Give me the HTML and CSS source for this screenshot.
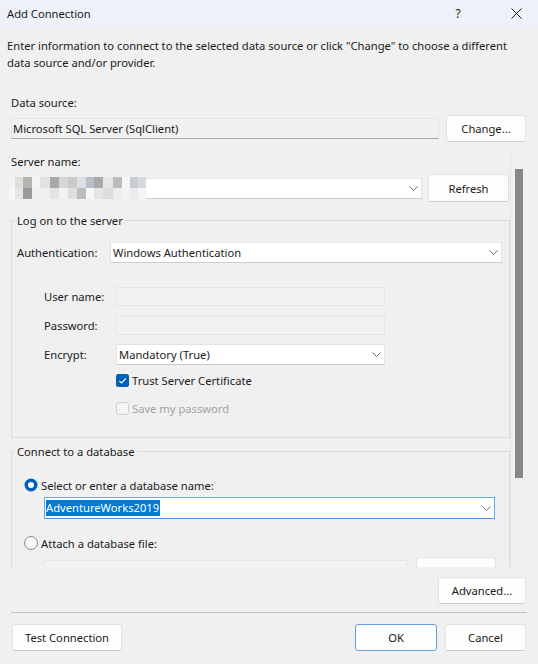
FILE: index.html
```html
<!DOCTYPE html>
<html>
<head>
<meta charset="utf-8">
<title>Add Connection</title>
<link rel="stylesheet" href="styles.css">
</head>
<body>
<div class="window">
  <div class="titlebar">
    <span class="title">Add Connection</span>
    <span class="help">?</span>
    <svg class="close" width="11" height="11" viewBox="0 0 11 11"><path d="M0.5 0.5 L10.5 10.5 M10.5 0.5 L0.5 10.5" stroke="#1a1a1a" stroke-width="1" fill="none"/></svg>
  </div>

  <p class="intro">Enter information to connect to the selected data source or click "Change" to choose a different<br>data source and/or provider.</p>

  <div class="ds">
    <div class="label">Data source:</div>
    <div class="ds-row">
      <div class="ds-box">Microsoft SQL Server (SqlClient)</div>
      <button class="btn btn-change">Change...</button>
    </div>
  </div>

  <div class="scroll">
    <div class="scroll-content">
      <div class="label server-label">Server name:</div>
      <div class="server-row">
        <div class="combo server-combo">
          <div class="mosaic"><div class="m-row m1"></div><div class="m-row m2"></div></div>
          <span class="combo-text"></span>
          <svg class="chev" width="9" height="5" viewBox="0 0 9 5"><path d="M0.5 0.5 L4.5 4.5 L8.5 0.5" fill="none" stroke="#707070" stroke-width="1"/></svg>
        </div>
        <button class="btn btn-refresh">Refresh</button>
      </div>

      <fieldset class="group group-logon">
        <legend>Log on to the server</legend>
        <div class="auth-row">
          <span class="lbl lbl-auth">Authentication:</span>
          <div class="combo auth-combo">
            <span class="combo-text">Windows Authentication</span>
            <svg class="chev" width="9" height="5" viewBox="0 0 9 5"><path d="M0.5 0.5 L4.5 4.5 L8.5 0.5" fill="none" stroke="#707070" stroke-width="1"/></svg>
          </div>
        </div>
        <div class="sub-row user-row">
          <span class="lbl lbl-sub">User name:</span>
          <div class="textbox"></div>
        </div>
        <div class="sub-row pass-row">
          <span class="lbl lbl-sub">Password:</span>
          <div class="textbox"></div>
        </div>
        <div class="sub-row enc-row">
          <span class="lbl lbl-sub">Encrypt:</span>
          <div class="combo enc-combo">
            <span class="combo-text">Mandatory (True)</span>
            <svg class="chev" width="9" height="5" viewBox="0 0 9 5"><path d="M0.5 0.5 L4.5 4.5 L8.5 0.5" fill="none" stroke="#707070" stroke-width="1"/></svg>
          </div>
        </div>
        <div class="check-row trust-row">
          <svg class="check" width="13" height="13" viewBox="0 0 13 13"><rect x="0" y="0" width="13" height="13" rx="2.5" fill="#005fb8"/><path d="M3.3 6.8 L5.5 9 L9.8 4.5" fill="none" stroke="#ffffff" stroke-width="1.1"/></svg>
          <span class="check-label">Trust Server Certificate</span>
        </div>
        <div class="check-row save-row">
          <svg class="check" width="13" height="13" viewBox="0 0 13 13"><rect x="0.5" y="0.5" width="12" height="12" rx="2.5" fill="#f5f5f5" stroke="#cfcfcf" stroke-width="1"/></svg>
          <span class="check-label disabled">Save my password</span>
        </div>
      </fieldset>

      <fieldset class="group group-db">
        <legend>Connect to a database</legend>
        <div class="radio-row radio-select">
          <svg class="radio" width="14" height="14" viewBox="0 0 14 14"><circle cx="7" cy="7" r="6.5" fill="#005fb8"/><circle cx="7" cy="7" r="3" fill="#ffffff"/></svg>
          <span class="radio-label">Select or enter a database name:</span>
        </div>
        <div class="combo db-combo">
          <span class="combo-text"><span class="sel">AdventureWorks2019</span></span>
          <svg class="chev" width="9" height="5" viewBox="0 0 9 5"><path d="M0.5 0.5 L4.5 4.5 L8.5 0.5" fill="none" stroke="#707070" stroke-width="1"/></svg>
        </div>
        <div class="radio-row radio-attach">
          <svg class="radio" width="14" height="14" viewBox="0 0 14 14"><circle cx="7" cy="7" r="6.5" fill="#f6f6f6" stroke="#8a8a8a" stroke-width="1"/></svg>
          <span class="radio-label">Attach a database file:</span>
        </div>
        <div class="attach-row">
          <div class="textbox attach-box"></div>
          <button class="btn btn-browse">Browse...</button>
        </div>
      </fieldset>
    </div>
    <div class="scrollbar"><div class="thumb"></div></div>
  </div>

  <div class="adv-row"><button class="btn btn-adv">Advanced...</button></div>
  <div class="sep"></div>
  <div class="footer">
    <button class="btn btn-test">Test Connection</button>
    <span class="spacer"></span>
    <button class="btn btn-ok">OK</button>
    <button class="btn btn-cancel">Cancel</button>
  </div>
</div>
</body>
</html>
```
FILE: styles.css
```css
* { box-sizing: border-box; }

body {
  margin: 0;
  background: #f0f0f0;
  font-family: "Noto Sans", "Open Sans", sans-serif;
  font-size: 11.2px;
  color: #1a1a1a;
}

.window {
  width: 538px;
  height: 664px;
  display: flex;
  flex-direction: column;
  overflow: hidden;
  background: #f0f0f0;
}

/* title bar */
.titlebar {
  flex: none;
  height: 27px;
  display: flex;
  align-items: center;
  padding-left: 7px;
  background: #eef2f8;
}
.title { flex: 1; }
.help { width: 12px; text-align: center; margin-right: 47px; font-size: 12px; }
.close { margin-right: 16px; }

.intro {
  margin: 10px 0 0;
  padding: 0 7px;
  line-height: 17px;
}

.label { line-height: 15px; }

/* data source */
.ds {
  margin-top: 24px;
  padding: 0 12px 0 11px;
}
.ds-row {
  display: flex;
  align-items: center;
  gap: 7px;
  height: 27px;
  margin-top: 5px;
}
.ds-box {
  width: 428px;
  height: 21px;
  border: 1px solid #e4e4e4;
  border-bottom-color: #a9a9a9;
  padding-left: 1px;
  line-height: 19px;
}

/* buttons */
.btn {
  font: inherit;
  color: #1a1a1a;
  background: #fdfdfd;
  border: 1px solid #e2e2e2;
  border-bottom-color: #cccccc;
  border-radius: 3px;
  height: 27px;
  padding: 0;
  flex: none;
}
.btn-change { width: 80px; }
.btn-refresh { width: 81px; height: 28px; }
.btn-browse { width: 80px; margin-left: 9px; }
.btn-adv { width: 88px; }
.btn-test { width: 110px; }
.btn-ok { width: 82px; border-color: #6aa3dc; }
.btn-cancel { width: 81px; }

/* scroll area */
.scroll {
  flex: none;
  display: flex;
  height: 415px;
  margin-top: 10px;
}
.scroll-content {
  width: 511px;
  flex: none;
  overflow: hidden;
  border-right: 1px solid #e2e2e2;
  padding-left: 11px;
  padding-top: 2px;
}
.scrollbar { flex: 1; }
.thumb {
  margin: 17px 0 0 4px;
  width: 8px;
  height: 309px;
  background: #878787;
}

/* combo boxes */
.combo {
  display: flex;
  align-items: center;
  background: #ffffff;
  border: 1px solid #e3e3e3;
  border-bottom-color: #cdcdcd;
  height: 21px;
  flex: none;
}
.combo-text { flex: 1; padding-left: 2px; white-space: nowrap; }
.chev { flex: none; margin-right: 3px; }

.server-row {
  display: flex;
  align-items: center;
  gap: 6px;
  height: 28px;
  margin: 5px 0 0 -2px;
}
.server-combo { width: 413px; }
.mosaic {
  width: 137px;
  height: 22px;
  margin: -1px 0 0 -1px;
  display: flex;
  flex-direction: column;
  flex: none;
}
.m-row { flex: 1; }
.m1 {
  background: linear-gradient(to right,
    #f3f3f3 0 6px, #dedede 6px 14px, #b5b5b0 14px 23px, #f4f4f4 23px 31px,
    #e2e2e2 31px 41px, #a9a9a9 41px 50px, #d6d6d6 50px 59px, #cacaca 59px 68px,
    #e0e0e0 68px 77px, #b8c1ca 77px 85px, #aaaaaa 85px 94px, #e6e6e6 94px 104px,
    #bcbcbc 104px 113px, #f6f6f6 113px 121px, #c9cdd2 121px 129px, #d6d9dd 129px 137px);
}
.m2 {
  background: linear-gradient(to right,
    #f8f8f8 0 6px, #e6e6e6 6px 14px, #9a9a9a 14px 23px, #efefef 23px 31px,
    #f0f0f0 31px 41px, #e4e4e4 41px 50px, #f2f2f2 50px 59px, #dfdfdf 59px 68px,
    #bdbdbd 68px 77px, #f8f8f8 77px 85px, #e5e5e5 85px 94px, #dddddd 94px 104px,
    #ededed 104px 113px, #f3f3f3 113px 121px, #ececec 121px 129px, #f5f5f5 129px 137px);
}

/* group boxes */
.group {
  margin: 0;
  padding: 0;
  width: 499px;
  min-width: 0;
  border: 1px solid #dcdcdc;
}
.group legend {
  margin-left: 3px;
  padding: 0 2px;
  line-height: 15px;
}
.group-logon { margin-top: 11px; padding-bottom: 22px; }
.group-db { margin-top: 6px; padding-bottom: 40px; }

.auth-row {
  display: flex;
  align-items: center;
  margin-top: 14px;
  padding-left: 5px;
}
.lbl-auth { width: 93px; flex: none; }
.auth-combo { width: 392px; }

.sub-row {
  display: flex;
  align-items: center;
  padding-left: 32px;
}
.lbl-sub { width: 72px; flex: none; }
.user-row { margin-top: 24px; }
.pass-row { margin-top: 10px; }
.enc-row { margin-top: 9px; }
.textbox {
  width: 269px;
  height: 19px;
  background: #f2f2f2;
  border: 1px solid #e5e5e5;
  flex: none;
}
.enc-combo { width: 269px; }

.check-row {
  display: flex;
  align-items: center;
  height: 13px;
  padding-left: 104px;
  gap: 3px;
}
.check { flex: none; }
.check-label { line-height: 15px; }
.check-label.disabled { color: #a2a2a2; }
.trust-row { margin-top: 9px; }
.save-row { margin-top: 15px; }

.radio-row {
  display: flex;
  align-items: center;
  height: 14px;
  padding-left: 12px;
  gap: 3px;
}
.radio { flex: none; }
.radio-label { line-height: 15px; }
.radio-select { margin-top: 19px; }
.radio-attach { margin-top: 17px; }

.db-combo {
  width: 451px;
  height: 22px;
  margin: 5px 0 0 32px;
  border: 1px solid #65a9e6;
  border-bottom-color: #4c95dc;
}
.combo-text .sel {
  background: #0078d7;
  color: #ffffff;
  display: inline-block;
  line-height: 16px;
  padding: 0 1px 0 0;
}
.db-combo .combo-text { padding-left: 1px; }

.attach-row {
  display: flex;
  align-items: flex-start;
  margin: 7px 0 0 32px;
}
.attach-box { width: 363px; margin-top: 3px; background: #f3f3f3; }

/* bottom */
.adv-row {
  display: flex;
  justify-content: flex-end;
  padding-right: 12px;
  margin-top: 10px;
}
.sep {
  height: 1px;
  margin: 8px 11px 0;
  background: #c2c2c2;
}
.footer {
  display: flex;
  gap: 8px;
  padding: 0 12px;
  margin-top: 11px;
}
.spacer { flex: 1; }
```
